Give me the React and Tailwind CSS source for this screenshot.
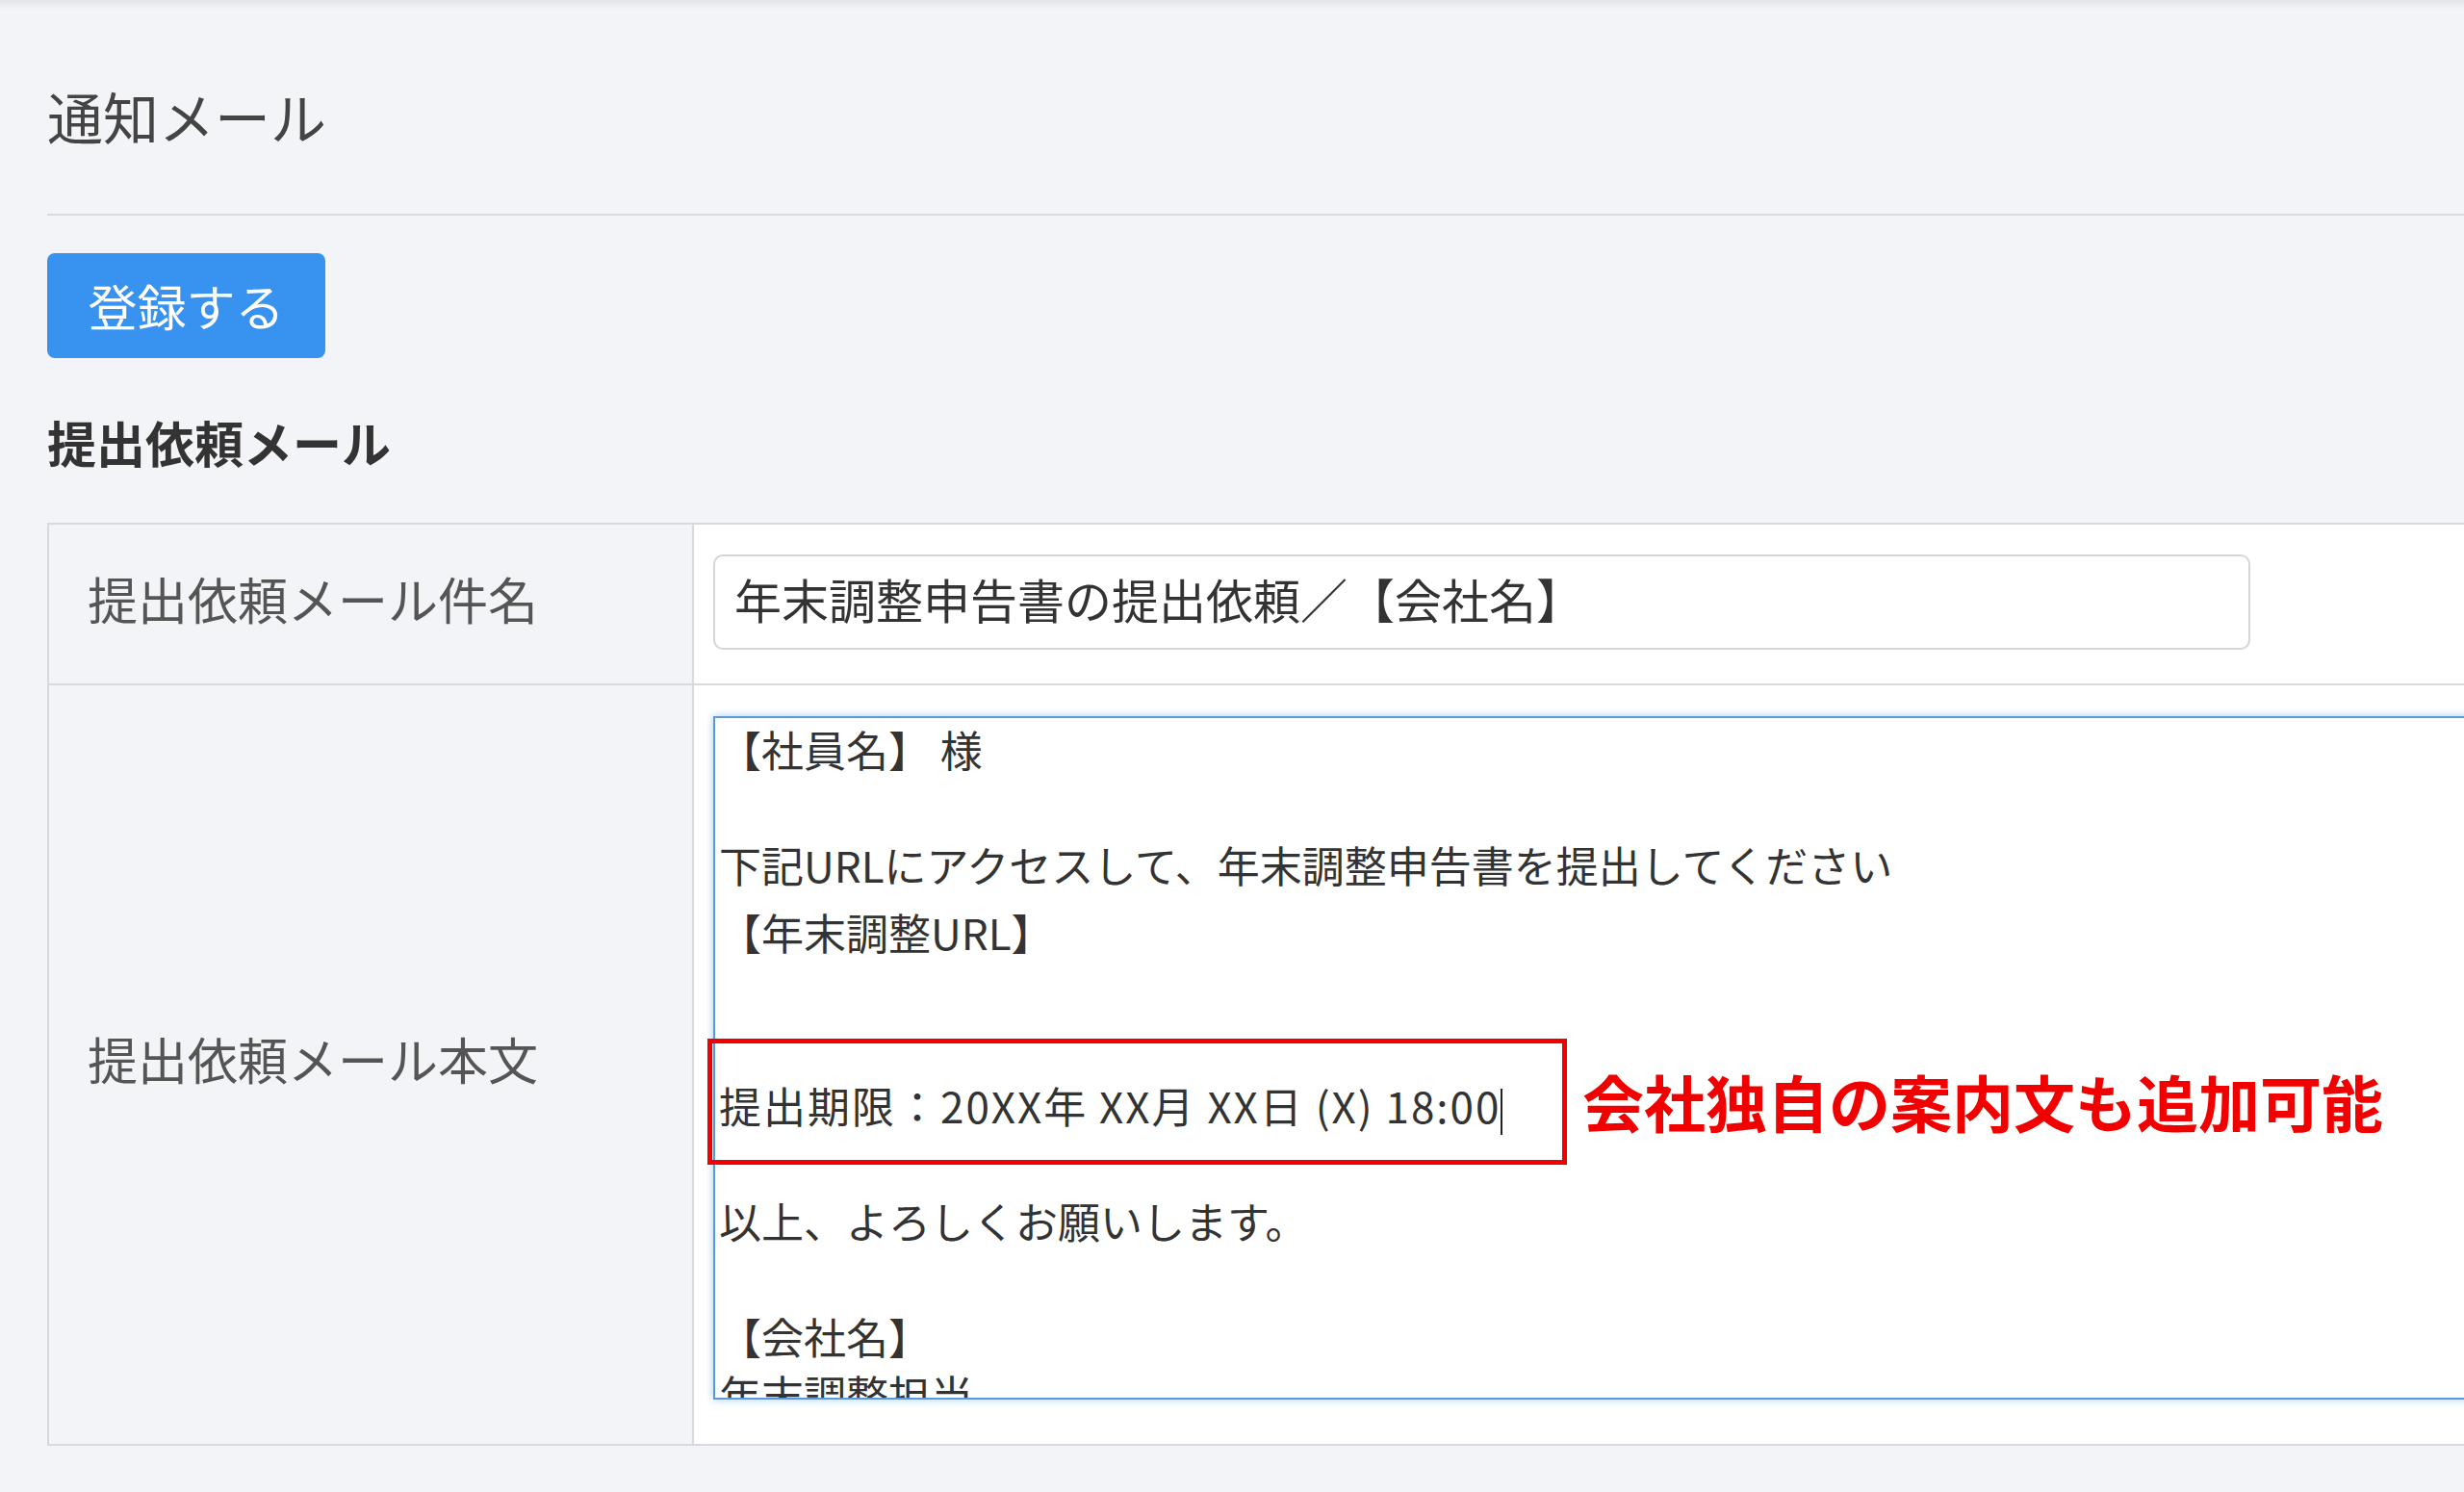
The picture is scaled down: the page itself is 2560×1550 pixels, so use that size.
import React from 'react';

const bodyLines = [
  { text: '【社員名】 様' },
  { text: '' },
  { text: '下記URLにアクセスして、年末調整申告書を提出してください' },
  { text: '【年末調整URL】', extra: true },
  { text: '' },
  { text: '' },
  { text: '提出期限：20XX年 XX月 XX日 (X) 18:00', cursor: true },
  { text: '' },
  { text: '以上、よろしくお願いします。' },
  { text: '' },
  { text: '【会社名】' },
  { text: '年末調整担当' },
];

const App = () => {
  return (
    <div className="relative w-[2560px] h-[1550px] overflow-hidden bg-[#f3f4f7] font-['Noto_Sans_CJK_JP','Noto_Sans',sans-serif]">
      <div className="h-[10px] bg-linear-to-b from-[#e4e5e8] to-[#f3f4f7]" />

      <div className="pl-[49px]">
        {/* page title */}
        <div className="pt-[70px] pb-[62px] border-b-2 border-[#d9dadd]">
          <h1 className="text-[58px] leading-[80px] text-[#444] font-normal">通知メール</h1>
        </div>

        <button className="mt-[39px] w-[289px] h-[109px] rounded-[8px] bg-[#3792f0] text-white text-[51px] leading-none flex items-center justify-center">
          登録する
        </button>

        <h2 className="mt-[57px] text-[51px] leading-[60px] font-bold text-[#333]">提出依頼メール</h2>

        {/* settings table */}
        <div className="mt-[54px] w-[2600px] border-2 border-[#d8d9dc]">
          <div className="flex h-[167px] border-b-2 border-[#d8d9dc]">
            <div className="w-[670px] shrink-0 border-r-2 border-[#d8d9dc] flex items-center pl-[40px] pb-[12px] text-[52px] text-[#555]">
              提出依頼メール件名
            </div>
            <div className="flex-1 bg-white pl-[20px] pt-[31px]">
              <div className="w-[1597px] h-[99px] border-2 border-[#d4d5d8] rounded-[10px] bg-white flex items-center pl-[20px] pb-[8px] text-[49px] text-[#333]">
                年末調整申告書の提出依頼／【会社名】
              </div>
            </div>
          </div>
          <div className="flex h-[788px]">
            <div className="w-[670px] shrink-0 border-r-2 border-[#d8d9dc] flex items-center pl-[40px] pb-[12px] text-[52px] text-[#555]">
              提出依頼メール本文
            </div>
            <div className="flex-1 bg-white pl-[20px] pt-[32px]">
              <div className="w-[1900px] h-[710px] overflow-hidden border-2 border-[#5b9ad6] shadow-[0_0_8px_rgba(102,175,233,0.6)] bg-white pl-[4px] pt-[2px] text-[44px] leading-[60px] text-[#333]">
                {bodyLines.map((line, i) => (
                  <div
                    key={i}
                    className={
                      line.extra
                        ? 'h-[60px] mt-[10px] whitespace-pre'
                        : line.cursor
                        ? 'h-[60px] whitespace-pre tracking-[2px]'
                        : 'h-[60px] whitespace-pre'
                    }
                  >
                    {line.text}
                    {line.cursor && <span className="inline-block w-[2px] h-[48px] bg-[#222] align-middle" />}
                  </div>
                ))}
              </div>
            </div>
          </div>
        </div>
      </div>

      {/* annotation */}
      <div className="absolute left-[735px] top-[1079px] w-[893px] h-[131px] border-[5px] border-[#f20000]" />
      <div className="absolute left-[1644px] top-[1103px] text-[64px] leading-[80px] font-bold text-[#f20000] whitespace-nowrap">
        会社独自の案内文も追加可能
      </div>
    </div>
  );
};

export default App;
